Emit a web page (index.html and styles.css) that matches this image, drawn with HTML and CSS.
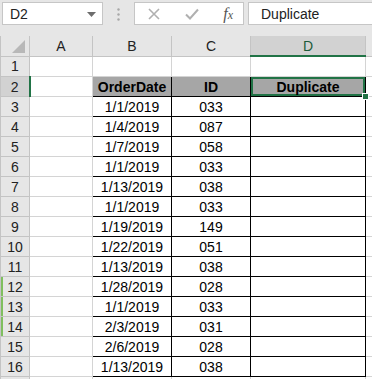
FILE: index.html
```html
<!DOCTYPE html>
<html>
<head>
	<meta charset="UTF-8">
	<title>Duplicate</title>
	<link rel="stylesheet" href="styles.css">
</head>
<body>

<div class="barre">
	<div class="nom">
		<span>D2</span>
		<svg class="fleche" width="9" height="5" viewBox="0 0 9 5"><path d="M0 0h9L4.5 5z" fill="#6d6d6d"/></svg>
	</div>
	<div class="points">
		<svg width="3" height="13" viewBox="0 0 3 13"><circle cx="1.5" cy="1.5" r="1.2" fill="#a8a8a8"/><circle cx="1.5" cy="6.5" r="1.2" fill="#a8a8a8"/><circle cx="1.5" cy="11.5" r="1.2" fill="#a8a8a8"/></svg>
	</div>
	<div class="boutons">
		<svg width="12" height="12" viewBox="0 0 12 12"><path d="M1 1L11 11M11 1L1 11" stroke="#b0b0b0" stroke-width="1.6"/></svg>
		<svg width="14" height="12" viewBox="0 0 14 12"><path d="M1 6.5L5 10.5L13 1.5" stroke="#b0b0b0" stroke-width="2" fill="none"/></svg>
		<span class="fx"><i>f</i><small>x</small></span>
	</div>
	<div class="formule">Duplicate</div>
</div>

<table class="feuille">
	<colgroup>
		<col class="colN">
		<col class="colA">
		<col class="colB">
		<col class="colC">
		<col class="colD">
		<col class="colE">
	</colgroup>
	<tr class="entetes">
		<th class="coin"><span class="triangle"></span></th>
		<th>A</th>
		<th>B</th>
		<th>C</th>
		<th class="actif">D</th>
		<th></th>
	</tr>
	<tr><th>1</th><td></td><td></td><td></td><td></td><td></td></tr>
	<tr><th class="actif">2</th><td></td><td class="t titre">OrderDate</td><td class="t titre">ID</td><td class="t titre sel">Duplicate<span class="poignee"></span></td><td></td></tr>
	<tr><th>3</th><td></td><td class="t">1/1/2019</td><td class="t">033</td><td class="t"></td><td></td></tr>
	<tr><th>4</th><td></td><td class="t">1/4/2019</td><td class="t">087</td><td class="t"></td><td></td></tr>
	<tr><th>5</th><td></td><td class="t">1/7/2019</td><td class="t">058</td><td class="t"></td><td></td></tr>
	<tr><th>6</th><td></td><td class="t">1/1/2019</td><td class="t">033</td><td class="t"></td><td></td></tr>
	<tr><th>7</th><td></td><td class="t">1/13/2019</td><td class="t">038</td><td class="t"></td><td></td></tr>
	<tr><th>8</th><td></td><td class="t">1/1/2019</td><td class="t">033</td><td class="t"></td><td></td></tr>
	<tr><th>9</th><td></td><td class="t">1/19/2019</td><td class="t">149</td><td class="t"></td><td></td></tr>
	<tr><th>10</th><td></td><td class="t">1/22/2019</td><td class="t">051</td><td class="t"></td><td></td></tr>
	<tr><th>11</th><td></td><td class="t">1/13/2019</td><td class="t">038</td><td class="t"></td><td></td></tr>
	<tr><th class="bord">12</th><td></td><td class="t">1/28/2019</td><td class="t">028</td><td class="t"></td><td></td></tr>
	<tr><th class="bord">13</th><td></td><td class="t">1/1/2019</td><td class="t">033</td><td class="t"></td><td></td></tr>
	<tr><th class="bord">14</th><td></td><td class="t">2/3/2019</td><td class="t">031</td><td class="t"></td><td></td></tr>
	<tr><th>15</th><td></td><td class="t">2/6/2019</td><td class="t">028</td><td class="t"></td><td></td></tr>
	<tr><th>16</th><td></td><td class="t">1/13/2019</td><td class="t">038</td><td class="t"></td><td></td></tr>
	<tr class="fin"><th></th><td></td><td></td><td></td><td></td><td></td></tr>
</table>

</body>
</html>
```

FILE: styles.css
```css
body {
	margin: 0;
	background: #e6e6e6;
	font-family: "Liberation Sans", Arial, sans-serif;
	font-size: 14px;
	color: #000;
	overflow: hidden;
}

/* barre de formule */
.barre {
	display: flex;
	height: 36px;
	padding: 2px 0 0 2px;
	box-sizing: border-box;
}

.nom {
	width: 101px;
	height: 23px;
	box-sizing: border-box;
	background: #fff;
	border: 1px solid #c6c6c6;
	display: flex;
	align-items: center;
	justify-content: space-between;
	padding: 0 6px 0 7px;
	color: #222;
}

.fleche {
	margin-top: 1px;
}

.points {
	width: 31px;
	display: flex;
	justify-content: center;
	padding-top: 6px;
	box-sizing: border-box;
}

.boutons {
	width: 110px;
	height: 23px;
	box-sizing: border-box;
	background: #fff;
	border: 1px solid #c6c6c6;
	display: flex;
	align-items: center;
	justify-content: space-between;
	padding: 0 10px 0 13px;
}

.fx {
	font-family: "Liberation Serif", serif;
	color: #555;
	font-size: 16px;
	font-style: italic;
}

.fx small {
	font-size: 12px;
}

.formule {
	flex: 1;
	height: 23px;
	box-sizing: border-box;
	margin-left: 4px;
	background: #fff;
	border: 1px solid #c6c6c6;
	border-right: none;
	padding: 3px 0 0 12px;
	color: #222;
}

/* feuille */
.feuille {
	border-collapse: collapse;
	table-layout: fixed;
	width: 372px;
	background: #fff;
}

.colN { width: 29px; }
.colA { width: 63px; }
.colB { width: 79px; }
.colC { width: 79px; }
.colD { width: 115px; }
.colE { width: 7px; }

.feuille th,
.feuille td {
	height: 19px;
	padding: 0;
	border: 1px solid #d4d4d4;
	text-align: center;
	font-weight: normal;
	white-space: nowrap;
	overflow: visible;
	position: relative;
}

.feuille th {
	background: #e6e6e6;
	color: #222;
	border-color: #c4c4c4;
	border-top-color: #e0e0e0;
}

.entetes th {
	border-color: #c4c4c4;
	border-top: none;
}

.feuille th.actif {
	background: #d2d2d2;
}

.entetes th.actif {
	border-bottom: 2px solid #217346;
	color: #1d5b3a;
}

tr th.actif:first-child {
	border-right: 2px solid #217346;
}

.feuille th.bord {
	box-shadow: inset 2px 0 0 #7fbf5f;
}

.triangle {
	position: absolute;
	right: 4px;
	bottom: 3px;
	width: 0;
	height: 0;
	border-left: 13px solid transparent;
	border-bottom: 13px solid #b8b8b8;
}

.feuille td.t {
	border: 1px solid #000;
}

.feuille td.titre {
	background: #a6a6a6;
	font-weight: bold;
}

.feuille td.sel {
	box-shadow: inset 0 0 0 2px #217346;
}

.poignee {
	position: absolute;
	right: -4px;
	bottom: -4px;
	width: 5px;
	height: 5px;
	background: #217346;
	border: 1px solid #fff;
	z-index: 2;
}

.fin th,
.fin td {
	height: 6px;
	border-bottom: none;
}
```
